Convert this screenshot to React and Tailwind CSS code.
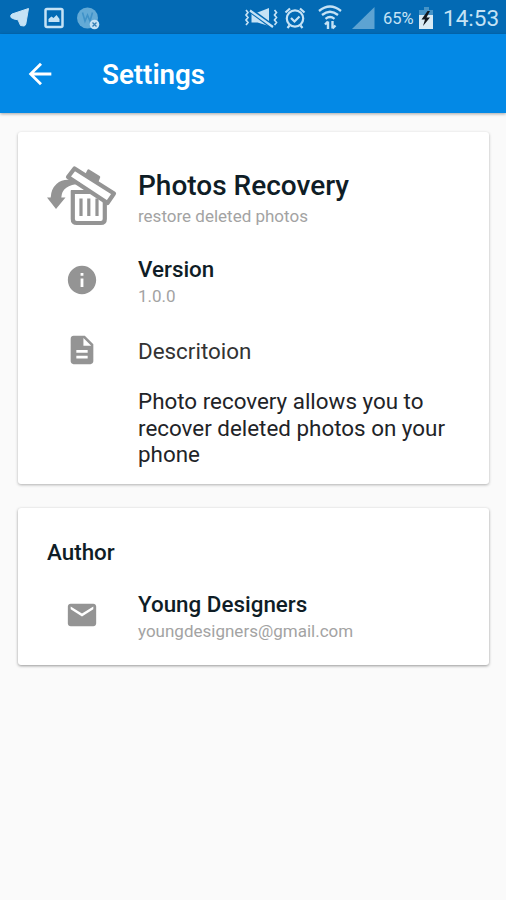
import React from "react";

function Icon({ d, className }) {
  return (
    <svg viewBox="0 0 24 24" className={className} fill="currentColor">
      <path d={d} />
    </svg>
  );
}

const BACK = "M20 11H7.83l5.59-5.59L12 4l-8 8 8 8 1.41-1.41L7.83 13H20v-2z";
const INFO = "M12 2C6.48 2 2 6.48 2 12s4.48 10 10 10 10-4.480 10-10S17.52 2 12 2zm1 15h-2v-6h2v6zm0-8h-2V7h2v2z";
const DOC = "M14 2H6c-1.100 0-1.990.9-1.990 2L4 20c0 1.100.89 2 1.990 2H18c1.100 0 2-.9 2-2V8l-6-6zm2 16H8v-2h8v2zm0-4H8v-2h8v2zm-3-5V3.500L18.500 9H13z";
const MAIL = "M20 4H4c-1.100 0-1.990.9-1.990 2L2 18c0 1.100.9 2 2 2h16c1.100 0 2-.9 2-2V6c0-1.100-.9-2-2-2zm0 4l-8 5-8-5V6l8 5 8-5v2z";

function StatusBar() {
  return (
    <div className="flex h-[34px] items-center bg-[#036ab4] text-[#c5e2f5]">
      <svg viewBox="0 0 110 34" className="h-[34px] w-[110px] shrink-0">
        <path d="M28.500 8.500 12 14q-2 1-1 3.500l3 1.500 4 .8 2.500 5.700 3.500.5q1.500-.5 1.800-2z" fill="#c5e2f5" stroke="#c5e2f5" strokeLinejoin="round" />
        <rect x="45.500" y="9" width="17" height="18" rx="1.500" fill="none" stroke="#c5e2f5" strokeWidth="2.500" />
        <path d="M48.500 22v-3l3-2.500 2 1.500 3-3 3 4v3z" fill="#c5e2f5" />
        <circle cx="87.500" cy="18" r="10.500" fill="#63aad6" />
        <path d="M82.500 12.500 85 21l2.500-6 2.500 6 2.500-8.500" fill="none" stroke="#3f92c8" strokeWidth="1.600" />
        <circle cx="94.500" cy="24.500" r="4.800" fill="#c5e2f5" />
        <path d="m92.500 22.500 4 4m0-4-4 4" stroke="#347fb5" strokeWidth="1.300" />
      </svg>
      <svg viewBox="240 0 140 34" className="ml-[130px] h-[34px] w-[140px] shrink-0" fill="none" stroke="currentColor" strokeWidth="1.800">
        <path d="m246 10 2 2.500-2 2.500 2 2.500-2 2.500 2 2.500-2 2.500M274.500 10l2 2.500-2 2.500 2 2.500-2 2.500 2 2.500-2 2.500" strokeWidth="1.700" />
        <path d="M251.500 12.500h6L269 8v18l-11.500-3.500h-6z" fill="currentColor" stroke="none" />
        <path d="m250 10 23 17" stroke="#036ab4" strokeWidth="4.800" />
        <path d="m250 10.500 23 16.500" strokeWidth="2.200" />
        <circle cx="295" cy="18.500" r="8.200" strokeWidth="2.200" />
        <path d="m291 18 3.500 3.500 5-5M285.500 12.500l4.500-4M304.500 12.500l-4.500-4M289.500 25.500l-2 2.500M300.500 25.500l2 2.500" strokeWidth="2.200" />
        <path d="M319 11q11-9 22 0M322 15q8-6.500 16 0M325.500 18.800q4.500-3.500 9 0" strokeWidth="2.300" />
        <path d="M328 29v-7.500m-3 3 3-3M332.500 21v7.500m3-3-3 3" strokeWidth="2.400" />
        <path d="M374.500 7v22H352z" fill="#5da3d2" stroke="none" />
      </svg>
      <span className="ml-[3px] w-[36px] pt-[4px] text-[16.5px] leading-none whitespace-nowrap">65%</span>
      <svg viewBox="0 0 16 24" className="mt-[2px] -ml-[1px] h-[24px] w-[16px] shrink-0">
        <path d="M6 1h5v3h4v7H1V4h5z" fill="#4593c7" />
        <path d="M1 9h14v14H1z" fill="#d9ebf5" />
        <path d="m9.500 5-6 8.500h3.500L5 20l7-8.500H8.500L12 5z" fill="#101820" />
      </svg>
      <span className="ml-[9px] pt-[3px] text-[22.5px] leading-none whitespace-nowrap">14:53</span>
    </div>
  );
}

function TrashRestore() {
  return (
    <svg viewBox="0 0 71 62" className="h-[62px] w-[71px]" fill="none" stroke="#949494">
      <path d="M26.800 25.500V54q0 4 4 4h24q4 0 4-4V27M25 27h32" strokeWidth="4.200" />
      <path d="M35 33.500v17.500M42.800 33.500v17.500M51 33.500v17.500" strokeWidth="3.200" />
      <path d="M28.500 3.500 68 28.500l-6.500 9.500L22 12z" strokeWidth="4.200" strokeLinejoin="round" fill="#fff" />
      <path d="m40.500 9.500 2-4 10.500 6.500-2 5z" fill="#949494" strokeWidth="2.500" strokeLinejoin="round" />
      <path d="M34 17.500Q19 11.500 10.500 19q-5.500 5-5.800 13.500H1L10 44l9.500-11.500h-4.200Q16 19.500 34 19z" fill="#949494" stroke="none" />
    </svg>
  );
}

function Row({ icon, children, className }) {
  return (
    <div className={"flex " + className}>
      <div className="mr-[21px] flex w-[71px] shrink-0 items-center justify-center text-[#949494]">{icon}</div>
      <div className="flex flex-col justify-center whitespace-nowrap">{children}</div>
    </div>
  );
}

export default function App() {
  return (
    <div className="flex h-[900px] w-[506px] flex-col overflow-hidden bg-[#fafafa] font-['Roboto',sans-serif] text-[#0f1d26]">
      <StatusBar />
      <header className="flex h-[79px] shrink-0 items-center bg-[#0389e6] pl-[23px] text-white shadow-[0_1px_3px_rgba(0,0,0,0.35)]">
        <Icon d={BACK} className="h-[34px] w-[34px]" />
        <h1 className="ml-[45px] pt-[3px] text-[27.7px] leading-[34px] font-semibold">Settings</h1>
      </header>
      <main className="flex flex-col gap-[24px] px-[18px] pt-[19px]">
        <section className="h-[352px] w-[471px] rounded-[3px] bg-white pt-[33px] pl-[28px] shadow-[0_1px_3px_rgba(0,0,0,0.3)]">
          <Row className="h-[62px]" icon={<TrashRestore />}>
            <div className="pt-[3px] text-[28px] leading-[36px] font-medium">Photos Recovery</div>
            <div className="text-[17px] leading-[24px] text-[#a3a3a3]">restore deleted photos</div>
          </Row>
          <Row className="mt-[24px] h-[58px]" icon={<Icon d={INFO} className="h-[34px] w-[34px]" />}>
            <div className="pt-[4px] text-[22.400px] leading-[28px] font-medium">Version</div>
            <div className="text-[17px] leading-[26px] text-[#a3a3a3]">1.0.0</div>
          </Row>
          <Row className="mt-[23px] h-[36px]" icon={<Icon d={DOC} className="h-[34px] w-[34px]" />}>
            <div className="pt-[1px] text-[22.400px] leading-[28px] text-[#333]">Descritoion</div>
          </Row>
          <p className="mt-[20px] ml-[92px] w-[330px] text-[22.400px] leading-[26.500px] text-[#1f2428]">
            Photo recovery allows you to recover deleted photos on your phone
          </p>
        </section>
        <section className="h-[157px] w-[471px] rounded-[3px] bg-white pt-[30px] pl-[28px] shadow-[0_1px_3px_rgba(0,0,0,0.4)]">
          <h2 className="pl-[1px] text-[22.400px] leading-[28px] font-medium">Author</h2>
          <Row className="mt-[22px] h-[54px]" icon={<Icon d={MAIL} className="h-[34px] w-[34px]" />}>
            <div className="pt-[4px] text-[22.400px] leading-[28px] font-medium">Young Designers</div>
            <div className="text-[17px] leading-[26px] text-[#a3a3a3]">youngdesigners@gmail.com</div>
          </Row>
        </section>
      </main>
    </div>
  );
}
